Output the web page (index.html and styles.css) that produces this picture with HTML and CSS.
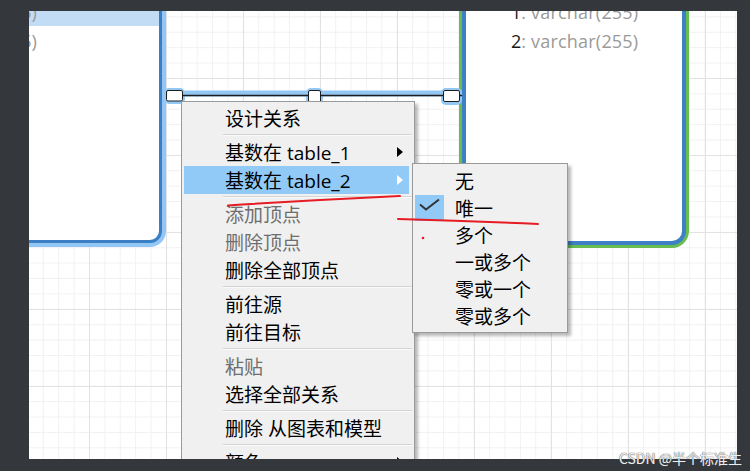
FILE: index.html
```html
<!DOCTYPE html>
<html lang="zh-CN">
<head>
<meta charset="utf-8">
<title>关系上下文菜单</title>
<link rel="stylesheet" href="styles.css">
</head>
<body>
<div class="canvas">
  <div class="table table-left">
    <div class="row row-sel"><span class="cell">varchar(255)</span></div>
    <div class="row"><span class="cell">varchar(255)</span></div>
  </div>
  <div class="table table-right">
    <div class="row"><span class="num">1</span><span class="type">: varchar(255)</span></div>
    <div class="row"><span class="num">2</span><span class="type">: varchar(255)</span></div>
  </div>

  <svg class="connector" width="708" height="448" viewBox="0 0 708 448">
    <line x1="150" y1="82.5" x2="433" y2="82.5" stroke="#93c7f4" stroke-width="6"/>
    <rect x="135" y="77" width="21" height="16" rx="5" fill="#93c7f4"/>
    <rect x="277" y="77" width="17" height="16" rx="5" fill="#93c7f4"/>
    <rect x="412" y="77" width="21" height="17" rx="5" fill="#93c7f4"/>
    <line x1="150" y1="84.5" x2="433" y2="84.5" stroke="#1e1e1e" stroke-width="1.6"/>
    <rect x="137.5" y="79.5" width="16" height="10.5" rx="1.5" fill="#fff" stroke="#1e1e1e"/>
    <rect x="279.5" y="79.5" width="12" height="12" rx="1.5" fill="#fff" stroke="#1e1e1e"/>
    <rect x="414.5" y="79.5" width="16" height="11" rx="1.5" fill="#fff" stroke="#1e1e1e"/>
  </svg>

  <div class="menu">
    <div class="item">设计关系</div>
    <div class="sep"></div>
    <div class="item has-sub">基数在 table_1</div>
    <div class="item has-sub active">基数在 table_2</div>
    <div class="sep"></div>
    <div class="item disabled">添加顶点</div>
    <div class="item disabled">删除顶点</div>
    <div class="item">删除全部顶点</div>
    <div class="sep"></div>
    <div class="item">前往源</div>
    <div class="item">前往目标</div>
    <div class="sep"></div>
    <div class="item disabled">粘贴</div>
    <div class="item">选择全部关系</div>
    <div class="sep"></div>
    <div class="item">删除 从图表和模型</div>
    <div class="sep"></div>
    <div class="item has-sub">颜色</div>
  </div>

  <div class="submenu">
    <div class="sitem"><span class="gut"></span><span>无</span></div>
    <div class="sitem"><span class="gut checked"><svg width="29" height="26" viewBox="0 0 29 26"><path d="M5 9.5 L11 14.5 L24 4.5" fill="none" stroke="#333" stroke-width="2" stroke-linejoin="miter"/></svg></span><span>唯一</span></div>
    <div class="sitem"><span class="gut"></span><span>多个</span></div>
    <div class="sitem"><span class="gut"></span><span>一或多个</span></div>
    <div class="sitem"><span class="gut"></span><span>零或一个</span></div>
    <div class="sitem"><span class="gut"></span><span>零或多个</span></div>
  </div>

  <svg class="marks" width="708" height="448" viewBox="0 0 708 448">
    <path d="M199 194.5 Q 285 189 371 185" fill="none" stroke="#e51c23" stroke-width="2" stroke-linecap="round"/>
    <path d="M369 208 Q 440 210 509 213" fill="none" stroke="#e51c23" stroke-width="2" stroke-linecap="round"/>
    <circle cx="394" cy="227" r="1.3" fill="#e51c23"/>
  </svg>
</div>
<div class="watermark">CSDN @半个标准生</div>
</body>
</html>
```

FILE: styles.css
```css
html, body {
  margin: 0;
  padding: 0;
}

body {
  width: 750px;
  height: 471px;
  background: #34383c;
  overflow: hidden;
  position: relative;
  font-family: "Open Sans", "Noto Sans CJK SC", sans-serif;
}

.canvas {
  position: relative;
  margin: 11px 0 0 29px;
  width: 708px;
  height: 448px;
  overflow: hidden;
  background-color: #ffffff;
  background-image:
    linear-gradient(to right, #e2e2e2 1px, transparent 1px),
    linear-gradient(to bottom, #e2e2e2 1px, transparent 1px),
    linear-gradient(to right, #f1f1f1 1px, transparent 1px),
    linear-gradient(to bottom, #f1f1f1 1px, transparent 1px);
  background-size: 77px 77px, 77px 77px, 15.4px 15.4px, 15.4px 15.4px;
  background-position: 60px 67px, 60px 67px, 13.8px 5.4px, 13.8px 5.4px;
}

/* diagram nodes */
.table {
  position: absolute;
  box-sizing: border-box;
  background: #fff;
  display: flex;
  flex-direction: column;
}

.table-left {
  left: -100px;
  top: -110px;
  width: 233px;
  height: 342px;
  border: 3px solid #3a7fc4;
  border-radius: 12px;
  box-shadow: 0 0 0 4px #92c6f4;
  padding-top: 93px;
}

.table-right {
  left: 433px;
  top: -100px;
  width: 224px;
  height: 334px;
  border: 4px solid #3d80c3;
  border-radius: 14px;
  box-shadow: 0 0 0 3px #67bd50;
  padding-top: 82px;
  padding-left: 45px;
}

.row {
  height: 29px;
  display: flex;
  align-items: center;
  font-size: 18px;
  color: #9a9a9a;
  white-space: nowrap;
}

.row-sel {
  background: #c3dcf6;
}

.cell {
  width: 104px;
  text-align: right;
  flex: none;
}

.num {
  color: #1a1a1a;
}

.type {
  color: #9a9a9a;
  letter-spacing: 0.2px;
}

.connector,
.marks {
  position: absolute;
  left: 0;
  top: 0;
  pointer-events: none;
}

/* context menu */
.menu {
  position: absolute;
  left: 152px;
  top: 90px;
  width: 234px;
  box-sizing: border-box;
  background: #f0f0f0;
  border: 1px solid #9a9a9a;
  padding: 2px 5px 2px 2px;
  box-shadow: 3px 3px 3px rgba(0, 0, 0, 0.28);
  display: flex;
  flex-direction: column;
}

.item {
  height: 28px;
  display: flex;
  align-items: center;
  padding-left: 41px;
  font-size: 19px;
  color: #000;
  white-space: nowrap;
}

.item.disabled {
  color: #6e6e6e;
}

.item.active {
  background: #91c9f7;
}

.item.has-sub::after {
  content: "";
  margin-left: auto;
  margin-right: 6px;
  width: 0;
  height: 0;
  border-top: 5px solid transparent;
  border-bottom: 5px solid transparent;
  border-left: 6px solid #000;
}

.item.active.has-sub::after {
  border-left-color: #ffffff;
}

.sep {
  height: 6px;
  margin: 0 -3px 0 39px;
  display: flex;
  flex-direction: column;
  justify-content: center;
}

.sep::before {
  content: "";
  height: 1px;
  background: #d4d4d4;
}

.sep::after {
  content: "";
  height: 1px;
  background: #fafafa;
}

/* submenu */
.submenu {
  position: absolute;
  left: 383px;
  top: 152px;
  width: 156px;
  box-sizing: border-box;
  background: #f0f0f0;
  border: 1px solid #9a9a9a;
  padding: 3px 0 3px 0;
  box-shadow: 3px 3px 3px rgba(0, 0, 0, 0.28);
  display: flex;
  flex-direction: column;
}

.sitem {
  height: 27px;
  display: flex;
  align-items: center;
  font-size: 19px;
  color: #000;
  white-space: nowrap;
}

.gut {
  flex: none;
  width: 29px;
  height: 26px;
  margin: 0 11px 0 2px;
  display: flex;
}

.gut.checked {
  background: #91c9f7;
}

.watermark {
  position: absolute;
  right: 8px;
  bottom: 5px;
  font-family: "Noto Sans CJK SC", sans-serif;
  font-size: 14px;
  line-height: 16px;
  color: rgba(255, 255, 255, 0.92);
  text-shadow: 0 0 1px #555, 0 0 1px #555;
}
```
